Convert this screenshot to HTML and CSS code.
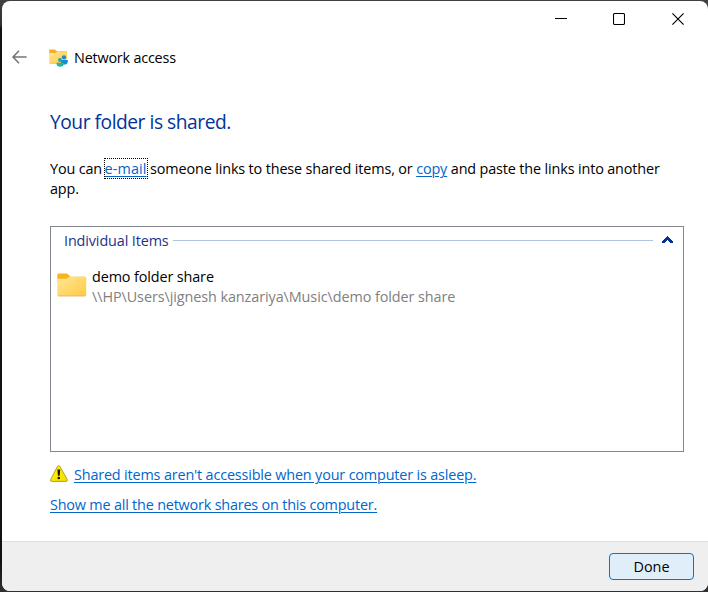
FILE: index.html
```html
<!DOCTYPE html>
<html lang="en">
<head>
<meta charset="utf-8">
<title>Network access</title>
<link rel="stylesheet" href="styles.css">
</head>
<body>
<div class="window">
  <header class="titlebar">
    <svg class="control" width="12" height="12" viewBox="0 0 12 12"><path d="M0 5.5H12" stroke="#000"/></svg>
    <svg class="control" width="12" height="12" viewBox="0 0 12 12"><rect x=".5" y=".5" width="11" height="11" rx="1.2" fill="none" stroke="#000" stroke-width="1.1"/></svg>
    <svg class="control" width="12" height="12" viewBox="0 0 12 12"><path d="M.4 .4L11.6 11.6M11.6 .4L.4 11.6" stroke="#000" stroke-width="1.15"/></svg>
  </header>
  <div class="caption">
    <svg class="back" width="15" height="14" viewBox="0 0 15 14"><path d="M7 .8L1 7l6 6.2M1 7h13.6" fill="none" stroke="#747474" stroke-width="1.6"/></svg>
    <svg class="share-icon" width="20" height="20" viewBox="0 0 20 20">
      <defs><linearGradient id="fold" x1="0" y1="0" x2="1" y2="1"><stop offset="0" stop-color="#ffe698"/><stop offset="1" stop-color="#ffcb43"/></linearGradient></defs>
      <path d="M.2 1.5h5.6l2 1.8h10.1v4H.2z" fill="#f2b11c"/>
      <path d="M.2 5h6.5l1.6-1.4h9.6v11.5H.2z" fill="url(#fold)"/>
      <path d="M.5 15.3h15" stroke="#dca640" stroke-width=".7"/>
      <circle cx="15" cy="9.3" r="2.1" fill="#168bd0"/>
      <path d="M12 12h6.8v1.4a3.4 3.1 0 0 1-6.8 0z" fill="#168bd8"/>
      <circle cx="11" cy="12" r="2" fill="#20a9a8"/>
      <path d="M7.6 14.7h7.2v.8a3.6 3.2 0 0 1-7.2 0z" fill="#25b6a8"/>
    </svg>
    <span class="caption-text">Network access</span>
  </div>
  <main class="content">
    <h1 class="heading"><span>Your folder is shared.</span></h1>
    <p class="intro">You can <a class="focused">e-mail</a> someone links to these shared items, or <a>copy</a> and paste the links into another<br>app.</p>
    <section class="list">
      <div class="group">
        <span class="group-title">Individual Items</span>
        <span class="rule"></span>
        <svg width="11" height="7" viewBox="0 0 11 7" shape-rendering="crispEdges"><path d="M5 0h1v1h1v1h1v1h1v1h1v1h1v2H8V6H7V5H6V4H5v1H4v1H3v1H0V5h1V4h1V3h1V2h1V1h1z" fill="#003399"/></svg>
      </div>
      <div class="item">
        <svg width="30" height="24" viewBox="0 0 30 24">
          <path d="M.3 2Q.3.5 1.6.5h7.7q.8 0 1.4.6l2.6 2.6h14.4q1.5 0 1.5 1.5V9H.3z" fill="#f8b51b"/>
          <path d="M.3 5.7h8.9q.8 0 1.5-.6l1-.8q.7-.6 1.5-.6h14.6q1.4 0 1.4 1.4v16.7q0 1.2-1.3 1.2H1.6q-1.3 0-1.3-1.2z" fill="url(#fold)"/>
          <path d="M1.2 23h27.2" stroke="#deb04b" stroke-width=".8"/>
        </svg>
        <div class="item-text">
          <div><span class="name">demo folder share</span></div>
          <div><span class="path">\\HP\Users\jignesh kanzariya\Music\demo folder share</span></div>
        </div>
      </div>
    </section>
    <div class="notice">
      <svg width="18" height="17" viewBox="0 0 17 17" preserveAspectRatio="none">
        <defs><linearGradient id="warn" x1="0" y1="0" x2="1" y2="1"><stop offset="0" stop-color="#fff500"/><stop offset="1" stop-color="#f5dc00"/></linearGradient></defs>
        <path d="M7.2 1.2Q8.2-.3 9.2 1.2L16.2 14.4Q17 16.4 15 16.4H1.8Q-.3 16.4.6 14.4z" fill="url(#warn)" stroke="#a58b20" stroke-width=".8"/>
        <path d="M7 4.5h2.6l-.5 6.2H7.5z" fill="#111"/><circle cx="8.3" cy="13" r="1.2" fill="#111"/>
      </svg>
      <a class="asleep">Shared items aren't accessible when your computer is asleep.</a>
    </div>
    <div class="all"><a class="shares">Show me all the network shares on this computer.</a></div>
  </main>
  <footer class="footer"><button class="done">Done</button></footer>
</div>
</body>
</html>
```
FILE: styles.css
```css
* { box-sizing: border-box; }
body {
  margin: 0;
  height: 592px;
  padding: 1px 0 1px 2px;
  overflow: hidden;
  background: linear-gradient(#414141 0, #303030 26px, #101116 28px, #101116 560px, #303033 592px);
  font: 14.4px/20px "Open Sans", "Noto Sans", sans-serif;
  color: #000;
}
.window {
  height: 590px;
  display: flex;
  flex-direction: column;
  background: #fff;
  border-radius: 8px;
  overflow: hidden;
}
.titlebar {
  height: 36px;
  display: flex;
  justify-content: flex-end;
  gap: 47px;
  padding: 12px 24px 0 0;
}
.titlebar .control:first-child { margin-right: -1px; }
.caption {
  height: 40px;
  display: flex;
  align-items: center;
  padding-left: 10px;
}
.share-icon { margin: 2px 5px 0 22px; }
.caption-text { margin-top: 2px; letter-spacing: -.2px; }
.content { padding: 31px 24px 0 48px; flex: 1; }
.heading {
  margin: 0;
  font-size: 19.2px;
  font-weight: 400;
  line-height: 28px;
  color: #003399;
  letter-spacing: -.46px;
}
.intro { margin: 23px 0 0; white-space: nowrap; letter-spacing: -.14px; }
a { color: #0066cc; text-decoration: underline; text-underline-offset: 2px; text-decoration-thickness: 1px; }
.focused {
  margin-left: -1px;
  letter-spacing: .1px;
  outline: 1px dotted #000;
}
.list {
  margin-top: 27px;
  height: 226px;
  border: 1px solid #828790;
}
.group {
  height: 25px;
  display: flex;
  align-items: center;
  padding: 0 10px 0 13px;
}
.group-title { margin-top: 3px; color: #1e3287; letter-spacing: -.12px; }
.rule { flex: 1; height: 1px; background: #b0c2e5; margin: 2px 9px 0 4px; }
.item { display: flex; padding: 15px 0 0 6px; }
.item svg { margin-top: 6px; }
.item-text { margin-left: 5px; }
.name { letter-spacing: -.12px; }
.path { color: #808080; letter-spacing: -.08px; }
.notice { display: flex; margin-top: 13px; height: 20px; }
.notice svg { margin-right: 6px; }
.asleep { letter-spacing: -.16px; }
.shares { letter-spacing: -.19px; }
.all { margin-top: 10px; }
.footer {
  height: 50px;
  display: flex;
  justify-content: flex-end;
  padding: 11px 14px 0 0;
  border-top: 1px solid #dfdfdf;
  background: #efefef;
}
.done {
  width: 85px;
  height: 27px;
  padding: 0;
  border: 1px solid #0078d4;
  border-radius: 4px;
  background: #e0eef9;
  font: inherit;
  color: #000;
}
```
